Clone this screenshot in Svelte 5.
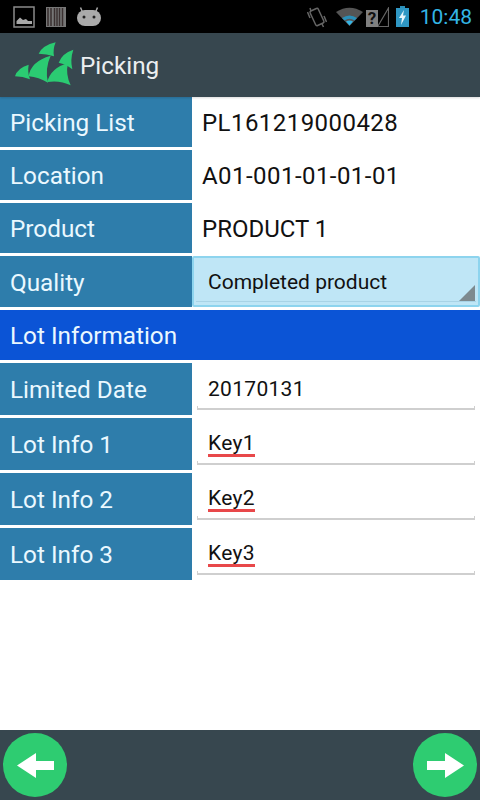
<script>
	const infoRows = [
		{ label: 'Picking List', value: 'PL161219000428', numeric: true },
		{ label: 'Location', value: 'A01-001-01-01-01', numeric: true },
		{ label: 'Product', value: 'PRODUCT 1', numeric: false }
	];
	const lotRows = [
		{ label: 'Limited Date', value: '20170131', flagged: false },
		{ label: 'Lot Info 1', value: 'Key1', flagged: true },
		{ label: 'Lot Info 2', value: 'Key2', flagged: true },
		{ label: 'Lot Info 3', value: 'Key3', flagged: true }
	];
</script>

<div class="screen">
	<div class="statusbar">
		<div class="status-left">
			<svg width="22" height="22" viewBox="0 0 22 22">
				<rect x="1" y="1" width="20" height="20" fill="none" stroke="#8a8a8a" stroke-width="1.5" />
				<path d="M3.500 18 L3.500 15 L7 11.500 L10 14 L13 13 L15 15 L19 15 L19 18 Z" fill="#a8a8a8" />
			</svg>
			<svg width="20" height="20" viewBox="0 0 20 20">
				<rect x="0" y="0" width="20" height="20" fill="#777" />
				<path d="M2 1 V19 M5 1 V19 M8.500 1 V19 M11 1 V19 M13.500 1 V19 M16.500 1 V19" stroke="#3a3030" stroke-width="1.500" />
			</svg>
			<svg width="24" height="20" viewBox="0 0 24 20">
				<path d="M5 4 L3.500 0.500 M19 4 L20.500 0.500" stroke="#aaa" stroke-width="1.500" />
				<rect x="0" y="3" width="24" height="16" rx="8" fill="#aaa" />
				<circle cx="7" cy="10" r="1.500" fill="#222" />
				<circle cx="17" cy="10" r="1.500" fill="#222" />
			</svg>
		</div>
		<div class="status-right">
			<svg class="rotate" width="20" height="22" viewBox="0 0 20 22">
				<g fill="none" stroke="#666" stroke-width="1.500">
					<rect x="5.500" y="3" width="9" height="16" rx="1.500" transform="rotate(-25 10 11)" />
					<path d="M0.500 6 L3 12 M3 2 L4 5 M17 10 L19.500 16 M15 18 L16.500 21" />
				</g>
			</svg>
			<svg class="wifi" width="27" height="19" viewBox="0 0 27 19">
				<path d="M0 5 Q13.500 -3.500 27 5 L13.500 19 Z" fill="#555" />
				<path d="M6 11 Q13.500 6 21 11 L18.500 13.500 Q13.500 10 8.500 13.500 Z" fill="#2a8fb8" />
				<path d="M10 14.500 Q13.500 12.500 17 14.500 L13.500 18.500 Z" fill="#33b5e5" />
			</svg>
			<svg class="signal" width="23" height="20" viewBox="0 0 23 20">
				<path d="M12 19 L22.500 1 V19.500 H12" fill="none" stroke="#666" stroke-width="1.200" />
				<rect x="0" y="3" width="12" height="17" fill="#808080" />
				<text x="6" y="17" text-anchor="middle" class="sim">?</text>
			</svg>
			<svg class="battery" width="13" height="21" viewBox="0 0 13 21">
				<rect x="4" y="0" width="5" height="2" fill="#2a8fb8" />
				<rect x="0" y="2" width="13" height="19" fill="#2f97c4" />
				<path d="M8 4 L3 12 H6 L5 19 L10 9.500 H7 Z" fill="#e8f6fc" />
			</svg>
			<span class="clock">10:48</span>
		</div>
	</div>

	<header class="toolbar">
		<svg class="logo" width="70" height="54" viewBox="0 0 210 162">
			<g fill="#2bcb72">
				<path d="M15 115 Q22 90 56 80 Q52 104 60 124 Q38 115 15 115 Z" />
				<path d="M56 115 Q62 70 122 53 Q104 92 114 134 Q86 118 56 115 Z" />
				<path d="M86 47 Q98 22 137 13 Q128 34 132 55 Q110 47 86 47 Z" />
				<path d="M146 74 Q156 46 190 35 Q180 64 187 94 Q168 78 146 74 Z" />
				<path d="M112 132 Q122 90 174 75 Q166 108 182 142 Q150 126 112 132 Z" />
			</g>
		</svg>
		<span class="title">Picking</span>
	</header>

	<main class="form">
		{#each infoRows as row}
			<div class="row">
				<div class="label">{row.label}</div>
				<div class="value" class:numeric={row.numeric}>{row.value}</div>
			</div>
		{/each}

		<div class="row quality">
			<div class="label">Quality</div>
			<div class="spinner">
				<span>Completed product</span>
				<i class="corner"></i>
			</div>
		</div>

		<div class="section">Lot Information</div>

		{#each lotRows as row}
			<div class="row lot">
				<div class="label">{row.label}</div>
				<div class="field">
					<span class:flagged={row.flagged}>{row.value}</span>
				</div>
			</div>
		{/each}
	</main>

	<footer class="bottombar">
		<button class="round" aria-label="Back">
			<svg width="37" height="25" viewBox="0 0 37 25">
				<path d="M0 12.500 L19 0 V8 H37 V17 H19 V25 Z" fill="#fff" />
			</svg>
		</button>
		<button class="round" aria-label="Next">
			<svg width="37" height="25" viewBox="0 0 37 25">
				<path d="M37 12.500 L18 0 V8 H0 V17 H18 V25 Z" fill="#fff" />
			</svg>
		</button>
	</footer>
</div>

<style>
	:global(body) {
		margin: 0;
		background: #fff;
	}

	.screen {
		width: 480px;
		height: 800px;
		display: flex;
		flex-direction: column;
		font-family: Roboto, 'Liberation Sans', sans-serif;
		overflow: hidden;
	}

	.statusbar {
		height: 33px;
		background: #000;
		display: flex;
		justify-content: space-between;
		align-items: center;
		padding: 0 8px 0 13px;
	}

	.status-left,
	.status-right {
		display: flex;
		align-items: center;
	}

	.status-left {
		gap: 11px;
	}

	.wifi {
		margin-left: 9px;
	}

	.signal {
		margin-left: 3px;
	}

	.sim {
		fill: #111;
		font-size: 17px;
		font-weight: 700;
	}

	.battery {
		margin-left: 7px;
	}

	.clock {
		color: #33b5e5;
		font-size: 21px;
		margin-left: 11px;
	}

	.toolbar {
		height: 64px;
		background: #37474f;
		display: flex;
		align-items: center;
		padding-left: 10px;
		position: relative;
		box-shadow: 0 1px 2px rgba(0, 0, 0, 0.15);
	}

	.title {
		color: #eceff1;
		font-size: 24.3px;
		padding-top: 1px;
	}

	.form {
		flex: 1;
		display: flex;
		flex-direction: column;
		gap: 3px;
	}

	.row {
		height: 50px;
		display: flex;
	}

	.row.quality {
		height: 51px;
	}

	.row.lot {
		height: 52px;
	}

	.label {
		width: 192px;
		background: #2e7dab;
		color: #eaf8ff;
		font-size: 24.3px;
		padding-left: 10px;
		box-sizing: border-box;
		display: flex;
		align-items: center;
	}

	.quality .label {
		padding-top: 1px;
	}

	.lot .label {
		padding-top: 1px;
	}

	.value {
		flex: 1;
		padding: 1px 0 0 10px;
		color: #111;
		font-size: 24px;
		display: flex;
		align-items: center;
	}

	.value.numeric {
		letter-spacing: 0.45px;
	}

	.spinner {
		flex: 1;
		position: relative;
		background: #bfe6f6;
		border: 2px solid #8dd4ee;
		border-radius: 2px;
		color: #111;
		font-size: 21px;
		padding-left: 14px;
		display: flex;
		align-items: center;
	}

	.spinner::after {
		content: '';
		position: absolute;
		left: 2px;
		right: 2px;
		bottom: 3px;
		height: 1px;
		background: #a8d3e6;
	}

	.corner {
		position: absolute;
		right: 3px;
		bottom: 4px;
		width: 0;
		height: 0;
		border-left: 16px solid transparent;
		border-bottom: 16px solid #7d8a8f;
	}

	.section {
		height: 50px;
		background: #0b54d6;
		color: #eaf8ff;
		font-size: 24.3px;
		padding-left: 10px;
		display: flex;
		align-items: center;
	}

	.field {
		flex: 1;
		position: relative;
		padding-left: 16px;
		color: #111;
		font-size: 21px;
		letter-spacing: 0.3px;
		display: flex;
		align-items: center;
	}

	.field::after {
		content: '';
		position: absolute;
		left: 5px;
		right: 5px;
		bottom: 5px;
		height: 4px;
		border: 1px solid #cfcfcf;
		border-top: 0;
		border-bottom-width: 2px;
		box-sizing: border-box;
	}

	.flagged {
		border-bottom: 3px solid #e8484a;
		line-height: 22px;
		margin-top: 1px;
	}

	.bottombar {
		height: 70px;
		background: #37474f;
		display: flex;
		justify-content: space-between;
		align-items: center;
		padding: 0 3px;
	}

	.round {
		width: 64px;
		height: 64px;
		border: 0;
		padding: 0;
		border-radius: 50%;
		background: #2ecc71;
		display: flex;
		align-items: center;
		justify-content: center;
	}
</style>
